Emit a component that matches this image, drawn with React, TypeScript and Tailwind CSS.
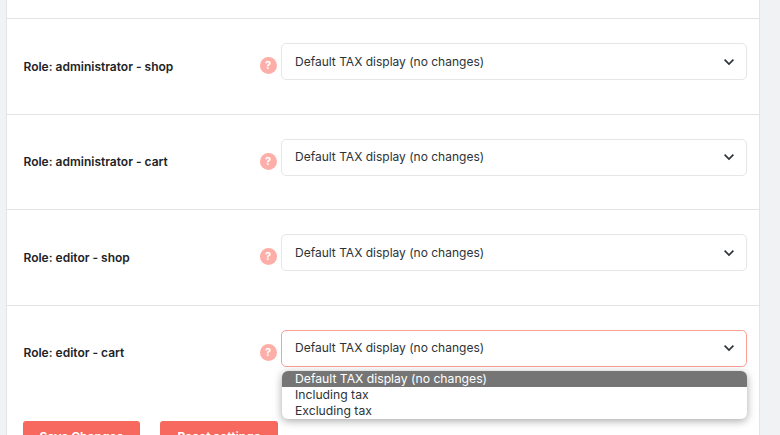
const rows = [
  "Role: administrator - shop",
  "Role: administrator - cart",
  "Role: editor - shop",
  "Role: editor - cart",
];

function Chevron() {
  return (
    <svg width="12" height="8" viewBox="0 0 12 8" fill="none" className="text-[#2c3338]">
      <path d="M1.6 1.7 6 6l4.4-4.3" stroke="currentColor" strokeWidth="1.7" />
    </svg>
  );
}

function Row({ label, open }: { label: string; open: boolean }) {
  return (
    <div className="flex h-[95.5px] items-start border-t border-[#e4e4e4] pl-[16.5px] pr-3 pt-6">
      <div className="w-[236px] pt-[14.5px] text-[12px] leading-[17px] font-semibold text-[#1d2327]">{label}</div>
      <div className="mt-[14px] flex size-[17px] items-center justify-center rounded-full bg-[#fdaea8] text-[11px] leading-none font-bold text-white">
        ?
      </div>
      <div className="relative ml-[4.5px] flex-1">
        <div
          className={`flex h-[37px] items-center justify-between rounded-[5px] border pr-[11px] pl-[13px] text-[12px] text-[#2c3338] ${
            open ? "border-[#fb9f97]" : "border-[#e6e6e6]"
          }`}
        >
          <span>Default TAX display (no changes)</span>
          <Chevron />
        </div>
        {open && (
          <div className="absolute top-[41px] right-0 left-[1px] z-10 overflow-hidden rounded-[6px] bg-white text-[12.2px] leading-4 text-[#2c3338] shadow-[0_2px_8px_rgba(0,0,0,0.35)]">
            <div className="bg-[#757575] pl-[13px] text-white">Default TAX display (no changes)</div>
            <div className="pl-[13px]">Including tax</div>
            <div className="pl-[13px]">Excluding tax</div>
          </div>
        )}
      </div>
    </div>
  );
}

export default function App() {
  return (
    <div className="flex h-[435px] w-[780px] overflow-hidden bg-[#f1f2f4] font-['Inter',sans-serif]">
      <div className="w-[6px]" />
      <div className="w-[754px] border-x border-[#e4e4e4] bg-white">
        <div className="h-[18px]" />
        {rows.map((label, i) => (
          <Row key={label} label={label} open={i === 3} />
        ))}
        <div className="flex gap-5 pt-[21px] pl-[16px]">
          <button className="h-9 w-[117px] rounded-[3px] bg-[#f7695e] pb-[5px] text-[12px] font-bold text-white">Save Changes</button>
          <button className="h-9 w-[118px] rounded-[3px] bg-[#f7695e] pb-[5px] text-[12px] font-bold text-white">Reset settings</button>
        </div>
      </div>
    </div>
  );
}
